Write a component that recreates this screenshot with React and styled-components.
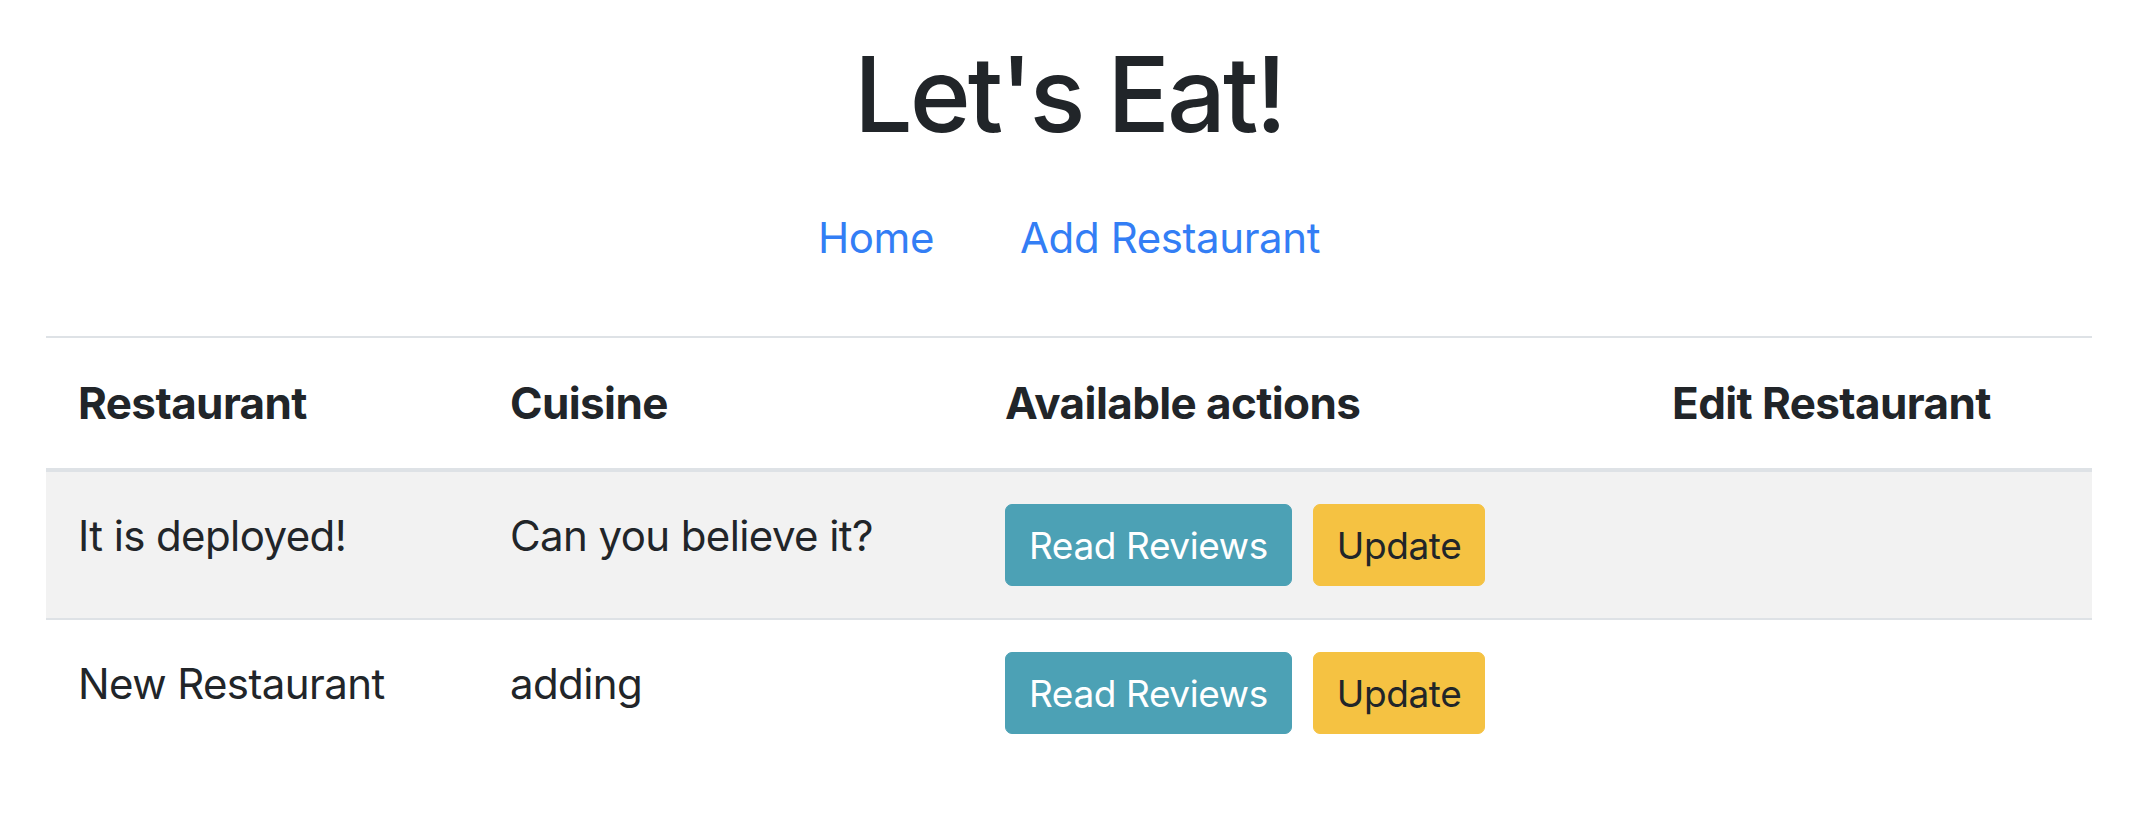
import React from 'react';
import styled, { createGlobalStyle } from 'styled-components';

const GlobalStyle = createGlobalStyle`
  body {
    margin: 0;
    background: #fff;
    color: #212529;
    font-family: Inter, "Noto Sans", "Liberation Sans", sans-serif;
  }
`;

const Page = styled.div`
  padding: 0 44px 0 46px;
`;

const Title = styled.h1`
  margin: 0;
  padding-top: 31px;
  text-align: center;
  font-size: 104px;
  font-weight: 500;
  line-height: 127px;
  letter-spacing: -3px;
`;

const Nav = styled.nav`
  display: flex;
  justify-content: center;
  margin-top: 48px;
`;

const NavLink = styled.a`
  padding: 0 43px;
  color: #337ef5;
  font-size: 42px;
  line-height: 63px;
  letter-spacing: -0.4px;
  text-decoration: none;
  cursor: pointer;
`;

const Table = styled.table`
  width: 100%;
  margin-top: 67px;
  border-collapse: collapse;
  table-layout: fixed;
`;

const HeadCell = styled.th`
  width: ${p => p.w}px;
  padding: 32px;
  border-top: 2px solid #dee2e6;
  border-bottom: 4px solid #dee2e6;
  text-align: left;
  vertical-align: bottom;
  font-size: 44px;
  font-weight: 700;
  line-height: 66px;
  letter-spacing: -0.6px;
`;

const Row = styled.tr`
  background: ${p => (p.striped ? '#f2f2f2' : 'transparent')};
`;

const Cell = styled.td`
  height: 82px;
  padding: 32px;
  border-bottom: ${p => (p.last ? 'none' : '2px solid #dee2e6')};
  vertical-align: top;
  font-size: 42px;
  line-height: 63px;
  letter-spacing: -0.6px;
`;

const Actions = styled.div`
  display: flex;
  gap: 21px;
`;

const Button = styled.button`
  height: 82px;
  padding: 0 23px;
  border: 1px solid ${p => (p.variant === 'info' ? '#4ca1b5' : '#f5c242')};
  border-radius: 7px;
  background: ${p => (p.variant === 'info' ? '#4ca1b5' : '#f5c242')};
  color: ${p => (p.variant === 'info' ? '#fff' : '#212529')};
  font-family: inherit;
  font-size: 37px;
  letter-spacing: -0.4px;
  cursor: pointer;
`;

const restaurants = [
  { name: 'It is deployed!', cuisine: 'Can you believe it?' },
  { name: 'New Restaurant', cuisine: 'adding' },
];

export default function App() {
  const lastIndex = restaurants.length - 1;
  return (
    <Page>
      <GlobalStyle />
      <Title>Let's Eat!</Title>
      <Nav>
        <NavLink>Home</NavLink>
        <NavLink>Add Restaurant</NavLink>
      </Nav>
      <Table>
        <thead>
          <tr>
            <HeadCell w={368}>Restaurant</HeadCell>
            <HeadCell w={431}>Cuisine</HeadCell>
            <HeadCell w={603}>Available actions</HeadCell>
            <HeadCell w={388}>Edit Restaurant</HeadCell>
          </tr>
        </thead>
        <tbody>
          {restaurants.map((r, i) => (
            <Row key={r.name} striped={i % 2 === 0}>
              <Cell last={i === lastIndex}>{r.name}</Cell>
              <Cell last={i === lastIndex}>{r.cuisine}</Cell>
              <Cell last={i === lastIndex}>
                <Actions>
                  <Button variant="info">Read Reviews</Button>
                  <Button variant="warning">Update</Button>
                </Actions>
              </Cell>
              <Cell last={i === lastIndex} />
            </Row>
          ))}
        </tbody>
      </Table>
    </Page>
  );
}
